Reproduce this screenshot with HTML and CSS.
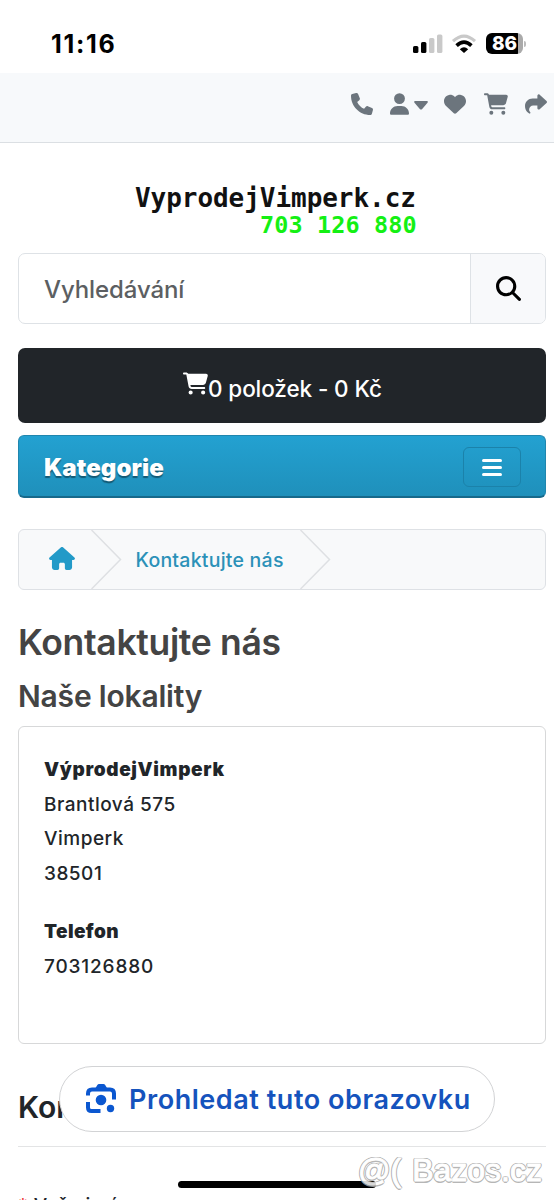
FILE: index.html
```html
<!DOCTYPE html>
<html lang="cs">
<head>
<meta charset="utf-8">
<title>Kontaktujte nás</title>
<link rel="stylesheet" href="styles.css">
</head>
<body>
<div class="screen">
  <header class="status">
    <span class="clock">11:16</span>
    <div class="indicators">
      <svg class="signal" viewBox="0 0 30 20"><rect x="0" y="12" width="5.4" height="7" rx="1.6"/><rect x="8" y="8" width="5.4" height="11" rx="1.6"/><g fill="#c9c9c9"><rect x="16" y="4" width="5.4" height="15" rx="1.6"/><rect x="24" y="0.5" width="5.4" height="18.5" rx="1.6"/></g></svg>
      <svg class="wifi" viewBox="0 0 26 20"><path d="M2 7.2Q13-3 24 7.2" fill="none" stroke="#c9c9c9" stroke-width="3.2"/><path d="M5.600 11.600Q13 4.500 20.400 11.600" fill="none" stroke="#000" stroke-width="3.600"/><path d="M8.800 15.200Q13 11.200 17.200 15.200L13 19Z"/></svg>
      <div class="battery"><span>86</span></div>
      <i class="cap"></i>
    </div>
  </header>
  <nav class="topbar">
    <svg class="phone" viewBox="0 0 512 512"><path d="M164.900 24.600c-7.700-18.600-28-28.500-47.400-23.200l-88 24C12.100 30.200 0 46 0 64c0 247.400 200.600 448 448 448 18 0 33.800-12.100 38.600-29.500l24-88c5.300-19.400-4.600-39.700-23.200-47.400l-96-40c-16.300-6.800-35.200-2.100-46.300 11.600L304.700 368C234.300 334.700 177.300 277.700 144 207.300l49.300-40.300c13.700-11.200 18.400-30 11.600-46.300l-40-96z"/></svg>
    <svg class="user" viewBox="0 0 448 512"><path d="M224 256a128 128 0 1 0 0-256 128 128 0 1 0 0 256zm-45.700 48C79.800 304 0 383.800 0 482.300 0 498.700 13.300 512 29.700 512h388.600c16.400 0 29.700-13.300 29.700-29.700 0-98.500-79.800-178.300-178.300-178.300h-91.400z"/></svg>
    <svg class="caret" viewBox="0 0 14 9"><path d="M1.2 0H12.800Q14.500.3 13.500 1.800L8 8.200Q7 9 6 8.200L.5 1.800Q-.5.3 1.200 0Z"/></svg>
    <svg class="heart" viewBox="0 0 512 512"><path d="M47.600 300.400l180.700 168.700c7.500 7 17.400 10.900 27.700 10.900s20.200-3.900 27.700-10.900l180.700-168.700c30.400-28.300 47.600-68 47.600-109.500v-5.800c0-69.900-50.500-129.500-119.400-141C347 36.500 300.600 51.400 268 84l-12 12-12-12c-32.600-32.600-79-47.500-124.600-39.900C50.500 55.600 0 115.200 0 185.100v5.800c0 41.500 17.200 81.200 47.600 109.500z"/></svg>
    <svg class="cart" viewBox="0 0 576 512"><path d="M0 24C0 10.700 10.700 0 24 0h45.500c22 0 41.500 12.800 50.600 32h411c26.300 0 45.500 25 38.600 50.400l-41 152.300c-8.500 31.400-37 53.300-69.500 53.300H170.700l5.400 28.500c2.200 11.300 12.100 19.500 23.600 19.500H488c13.300 0 24 10.700 24 24s-10.700 24-24 24H199.700c-34.600 0-64.300-24.600-70.700-58.500L77.400 54.500C76.700 50.700 73.400 48 69.500 48H24C10.700 48 0 37.300 0 24zm128 440a48 48 0 1 1 96 0 48 48 0 1 1-96 0zm336-48a48 48 0 1 1 0 96 48 48 0 1 1 0-96z"/></svg>
    <svg class="share" viewBox="0 0 512 512"><path d="M307 34.800c-11.500 5.100-19 16.600-19 29.200v64H176C78.800 128 0 206.800 0 304c0 113.300 81.500 163.900 100.200 174.100 2.500 1.400 5.300 1.900 8.100 1.900 10.900 0 19.700-8.900 19.700-19.700 0-7.500-4.300-14.400-9.800-19.500C108.800 431.900 96 414.400 96 384c0-53 43-96 96-96h96v64c0 12.600 7.400 24.100 19 29.200s25 3 34.400-5.400l160-144c6.700-6.100 10.600-14.700 10.600-23.800s-3.800-17.700-10.600-23.800l-160-144c-9.400-8.500-22.900-10.600-34.400-5.400z"/></svg>
  </nav>
  <main class="page">
    <div class="logo"><span class="logo-name">VyprodejVimperk.cz</span><span class="logo-tel">703 126 880</span></div>
    <div class="search">
      <span class="search-field">Vyhledávání</span>
      <span class="search-btn"><svg viewBox="0 0 512 512"><path d="M416 208c0 45.900-14.900 88.300-40 122.700l126.600 126.700c12.500 12.500 12.500 32.800 0 45.300s-32.800 12.500-45.300 0L330.700 376c-34.400 25.200-76.800 40-122.700 40C93.100 416 0 322.900 0 208S93.100 0 208 0s208 93.100 208 208zM208 352a144 144 0 1 0 0-288 144 144 0 1 0 0 288z"/></svg></span>
    </div>
    <div class="basket">
      <svg viewBox="0 0 576 512"><path d="M0 24C0 10.700 10.700 0 24 0h45.500c22 0 41.500 12.800 50.600 32h411c26.300 0 45.500 25 38.600 50.400l-41 152.300c-8.500 31.400-37 53.300-69.500 53.300H170.700l5.400 28.500c2.200 11.300 12.100 19.500 23.600 19.500H488c13.300 0 24 10.700 24 24s-10.700 24-24 24H199.700c-34.600 0-64.300-24.600-70.700-58.500L77.400 54.500C76.700 50.700 73.400 48 69.500 48H24C10.700 48 0 37.300 0 24zm128 440a48 48 0 1 1 96 0 48 48 0 1 1-96 0zm336-48a48 48 0 1 1 0 96 48 48 0 1 1 0-96z"/></svg>
      <span>0 položek - 0 Kč</span>
    </div>
    <div class="menu">
      <span class="menu-title">Kategorie</span>
      <span class="toggler"><i></i><i></i><i></i></span>
    </div>
    <div class="breadcrumb">
      <svg class="home" viewBox="0 0 576 512"><path d="M575.800 255.500c0 18-15 32.100-32 32.100h-32l.7 160.200c.2 35.500-28.500 64.300-64 64.300H392c-22.100 0-40-17.900-40-40v-88c0-17.700-14.300-32-32-32h-64c-17.700 0-32 14.300-32 32v88c0 22.100-17.900 40-40 40h-55.900c-35.300 0-64-28.700-64-64V287.600H32c-18 0-32-14-32-32.100 0-9 3-17 10-24L266.400 8c7-7 15-8 22-8s15 2 21 7l255.400 224.500c8 7 12 15 11 24z"/></svg>
      <svg class="chevron" viewBox="0 0 31 59"><path d="M.5 0L29.500 29.500 .5 59"/></svg>
      <span class="crumb">Kontaktujte nás</span>
      <svg class="chevron" viewBox="0 0 31 59"><path d="M.5 0L29.500 29.500 .5 59"/></svg>
    </div>
    <h1>Kontaktujte nás</h1>
    <h2>Naše lokality</h2>
    <section class="card">
      <b class="t-name">VýprodejVimperk</b>
      <span>Brantlová 575</span>
      <span>Vimperk</span>
      <span>38501</span>
      <b class="t-phone">Telefon</b>
      <span>703126880</span>
    </section>
    <h3>Kon</h3>
    <div class="label"><em>*</em> Vaše jméno</div>
  </main>
  <div class="lens">
    <svg viewBox="0 0 30 29"><path d="M2 11.500V9.500Q2 5.500 6 5.500H24Q28 5.500 28 9.500V15.500M2 18V23.500Q2 27 5.500 27H14.500" fill="none" stroke="#0b57d0" stroke-width="4"/><path d="M9 5L11.300 1Q12 0 13 0H17.500Q18.500 0 19.200 1L21.500 5Z"/><circle cx="15" cy="16" r="5.300"/><circle cx="24.500" cy="24.500" r="3.700"/></svg>
    <span>Prohledat tuto obrazovku</span>
  </div>
  <div class="home-bar"></div>
  <div class="watermark"><span>@(</span><span class="wm-name">Bazos.cz</span></div>
</div>
</body>
</html>
```
FILE: styles.css
```css
* { box-sizing: border-box; }
body { margin: 0; background: #fff; font-family: Inter, "Liberation Sans", sans-serif; color: #212529; }
svg { display: block; flex: none; }
.screen { position: relative; width: 554px; height: 1200px; overflow: hidden; }
.status { height: 73px; display: flex; justify-content: space-between; padding: 29px 28px 0 51px; color: #000; }
.clock { font-size: 25px; line-height: 31px; font-weight: 700; letter-spacing: 1.700px; }
.indicators { display: flex; align-items: flex-start; padding-top: 4px; }
.signal { width: 30px; height: 20px; margin: 1px 8px 0 0; }
.wifi { width: 26px; height: 20px; margin: 1px 9px 0 0; }
.battery { width: 37px; height: 21px; border-radius: 6px; background: linear-gradient(90deg, #000 32px, #aaa 32px); }
.battery span { display: block; width: 37px; text-align: center; font-size: 19px; line-height: 21px; font-weight: 800; color: #fff; }
.cap { width: 2px; height: 6px; margin: 8px 0 0 1px; border-radius: 0 3px 3px 0; background: #bbb; }
.topbar { height: 70px; display: flex; align-items: flex-start; padding: 20px 0 0 351px; background: #f7f9fb; border-bottom: 1px solid #dbdfe3; fill: #6c757d; }
.phone { width: 22px; height: 22px; }
.user { width: 19px; height: 22px; margin-left: 17px; }
.caret { width: 14px; height: 9px; margin: 8px 0 0 5px; }
.heart { width: 22px; height: 22px; margin-left: 16px; }
.cart { width: 24px; height: 22px; margin-left: 18px; }
.share { width: 22px; height: 22px; margin-left: 17px; }
.page { padding: 0 8px 0 18px; }
.logo { height: 110px; padding: 40px 0 0 117px; display: flex; flex-direction: column; font-family: "DejaVu Sans Mono", monospace; font-weight: 700; white-space: nowrap; }
.logo-name { font-size: 26px; line-height: 30px; color: #111; letter-spacing: -.05px; }
.logo-tel { font-size: 23.500px; line-height: 25px; padding-left: 125px; letter-spacing: .1px; color: #14f014; }
.search { height: 71px; display: flex; border: 1.500px solid #dee2e6; border-radius: 7px; overflow: hidden; }
.search-field { flex: 1; padding-left: 25px; font-size: 24px; line-height: 71px; font-weight: 500; letter-spacing: -.1px; color: #5c5f62; }
.search-btn { width: 75px; border-left: 1px solid #dee2e6; background: #f8f9fb; padding: 22px 0 0 25px; }
.search-btn svg { width: 25px; height: 25px; }
.basket { height: 75px; margin-top: 24px; border-radius: 7px; background: #212529; color: #fff; display: flex; padding-left: 165px; }
.basket svg { width: 25px; height: 23px; margin-top: 24px; fill: #fff; }
.basket span { font-size: 22.500px; line-height: 81px; font-weight: 500; letter-spacing: -.1px; }
.menu { height: 63px; margin-top: 12px; border: 1px solid #2086ae; border-bottom: 2px solid #17698b; border-radius: 6px; background: linear-gradient(#23a1d1, #1f90bb); display: flex; justify-content: space-between; padding: 11px 24px 0 25px; }
.menu-title { font-size: 24px; line-height: 41px; font-weight: 900; letter-spacing: .1px; color: #fff; text-shadow: 0 1.500px 1px rgba(0,0,0,.4); }
.toggler { width: 58px; height: 40px; border: 1.500px solid #1b82aa; border-radius: 6px; display: flex; flex-direction: column; align-items: center; justify-content: center; gap: 4px; }
.toggler i { width: 20px; height: 3px; border-radius: 2px; background: #fff; }
.breadcrumb { height: 61px; margin-top: 31px; border: 1.500px solid #dee1e5; border-radius: 6px; background: #f8f9fa; display: flex; }
.home { width: 26px; height: 23px; margin: 17px 16px 0 30px; fill: #229ac8; }
.chevron { width: 31px; height: 59px; fill: none; stroke: #dee0e3; stroke-width: 1.500; }
.crumb { width: 178px; padding-left: 13.500px; font-size: 19.500px; line-height: 60px; font-weight: 500; letter-spacing: .24px; color: #2b91b8; white-space: nowrap; }
h1, h2, h3 { margin: 0; font-weight: 560; white-space: nowrap; }
h1 { margin-top: 30px; font-size: 35.500px; line-height: 46px; letter-spacing: -.32px; color: #444; }
h2 { margin-top: 11px; font-size: 30px; line-height: 38px; letter-spacing: -.2px; color: #444; }
.card { height: 318px; margin-top: 11px; padding: 26px 25px; border: 1.500px solid #d7d8d9; border-radius: 6px; display: flex; flex-direction: column; font-size: 19px; line-height: 34.500px; font-weight: 500; letter-spacing: .5px; }
.card span:last-child { letter-spacing: .85px; }
.card b { font-weight: 900; letter-spacing: .65px; }
.card .t-phone { margin-top: 24px; letter-spacing: .4px; }
h3 { height: 103px; padding-top: 42px; border-bottom: 1px solid #e3e4e5; font-size: 30px; line-height: 42px; }
.label { margin-top: 47px; font-size: 19px; line-height: 24px; font-weight: 500; letter-spacing: .4px; }
.label em { color: #e33; font-style: normal; }
.lens { position: absolute; left: 59px; top: 1066px; width: 436px; height: 66px; border: 1.500px solid #d2d3d5; border-radius: 33px; background: #fff; display: flex; padding: 17px 0 0 26px; color: #1553bd; fill: #0b57d0; }
.lens svg { width: 30px; height: 29px; }
.lens span { margin-left: 13px; font-size: 27px; line-height: 31px; font-weight: 600; letter-spacing: .55px; white-space: nowrap; }
.home-bar { position: absolute; left: 178px; top: 1181px; width: 198px; height: 7px; border-radius: 4px; background: #000; }
.watermark { position: absolute; left: 358px; top: 1150px; display: flex; font: 32px/40px "Liberation Sans", sans-serif; color: #fff; -webkit-text-stroke: 1px #fff; opacity: .85; text-shadow: 1.500px 0 #aaa, -1.500px 0 #aaa, 0 1.500px #aaa, 0 -1.500px #aaa, 1px 1px #aaa, -1px -1px #aaa, 1px -1px #aaa, -1px 1px #aaa; }
.wm-name { margin-left: 11px; }
```
